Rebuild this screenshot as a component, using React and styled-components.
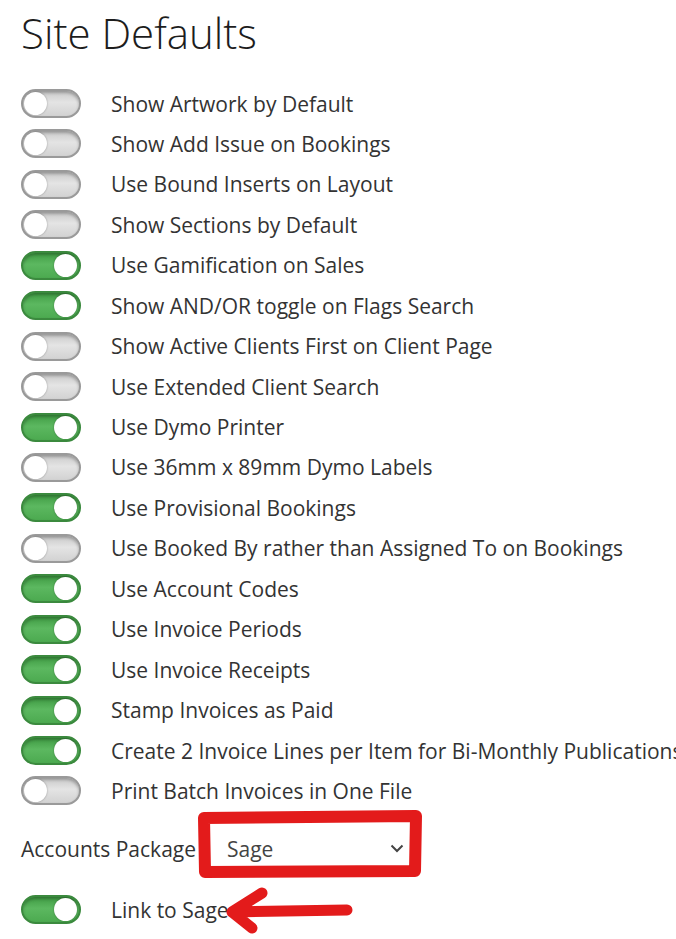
import React from 'react';
import styled, { createGlobalStyle } from 'styled-components';

const GlobalStyle = createGlobalStyle`
  html, body {
    margin: 0;
    padding: 0;
    background: #fff;
    overflow: hidden;
  }
  body {
    font-family: "Open Sans", "Liberation Sans", sans-serif;
    color: #333;
  }
`;

const Page = styled.div`
  position: relative;
  width: 676px;
  height: 939px;
  padding-left: 21px;
  box-sizing: border-box;
  overflow: hidden;
`;

const Title = styled.h1`
  margin: 8.7px 0 26.6px;
  font-size: 42px;
  line-height: 48px;
  font-weight: 300;
  color: #1d1d1d;
`;

const List = styled.div`
  display: flex;
  flex-direction: column;
`;

const Row = styled.div`
  display: flex;
  align-items: center;
  height: 40.45px;
  margin-top: ${(p) => p.$offset || 0}px;
  white-space: nowrap;
`;

const Track = styled.span`
  position: relative;
  flex: none;
  width: 60px;
  height: 29px;
  box-sizing: border-box;
  border-radius: 15px;
  border: 2px solid ${(p) => (p.$on ? '#3b8a3e' : '#9a9a9a')};
  background: ${(p) =>
    p.$on
      ? 'linear-gradient(#3f9b43, #5cb860 45%, #4caa50)'
      : 'linear-gradient(#c9c9c9, #e4e4e4 45%, #d2d2d2)'};
  box-shadow: inset 0 2px 3px rgba(0, 0, 0, 0.25);
`;

const Knob = styled.span`
  position: absolute;
  top: 1px;
  left: ${(p) => (p.$on ? '31px' : '1px')};
  width: 23px;
  height: 23px;
  border-radius: 50%;
  background: #fff;
  box-shadow: 0 0 2px rgba(0, 0, 0, 0.35);
`;

const Label = styled.span`
  margin-left: 30px;
  font-size: 21px;
  color: #333;
`;

const SelectRow = styled.div`
  display: flex;
  align-items: center;
  height: 48px;
  margin-top: 13.5px;
  white-space: nowrap;
`;

const SelectLabel = styled.span`
  font-size: 21px;
  color: #333;
`;

const Select = styled.div`
  display: flex;
  align-items: center;
  justify-content: space-between;
  width: 197px;
  height: 42px;
  margin-left: 15px;
  box-sizing: border-box;
  padding: 0 4px 0 16px;
  font-size: 21px;
  color: #444;
  background: #fff;
`;

const Annotation = styled.svg`
  position: absolute;
  left: 0;
  top: 0;
  pointer-events: none;
`;

const settings = [
  ['Show Artwork by Default', false],
  ['Show Add Issue on Bookings', false],
  ['Use Bound Inserts on Layout', false],
  ['Show Sections by Default', false],
  ['Use Gamification on Sales', true],
  ['Show AND/OR toggle on Flags Search', true],
  ['Show Active Clients First on Client Page', false],
  ['Use Extended Client Search', false],
  ['Use Dymo Printer', true],
  ['Use 36mm x 89mm Dymo Labels', false],
  ['Use Provisional Bookings', true],
  ['Use Booked By rather than Assigned To on Bookings', false],
  ['Use Account Codes', true],
  ['Use Invoice Periods', true],
  ['Use Invoice Receipts', true],
  ['Stamp Invoices as Paid', true],
  ['Create 2 Invoice Lines per Item for Bi-Monthly Publications', true],
  ['Print Batch Invoices in One File', false],
];

function Toggle({ on }) {
  return (
    <Track $on={on}>
      <Knob $on={on} />
    </Track>
  );
}

export default function App() {
  return (
    <Page>
      <GlobalStyle />
      <Title>Site Defaults</Title>
      <List>
        {settings.map(([text, on]) => (
          <Row key={text}>
            <Toggle on={on} />
            <Label>{text}</Label>
          </Row>
        ))}
        <SelectRow>
          <SelectLabel>Accounts Package</SelectLabel>
          <Select>
            Sage
            <svg width="14" height="9" viewBox="0 0 14 9">
              <path d="M1.5 1.5 L7 7 L12.5 1.5" fill="none" stroke="#444" strokeWidth="2" />
            </svg>
          </Select>
        </SelectRow>
        <Row $offset={16.8}>
          <Toggle on />
          <Label>Link to Sage</Label>
        </Row>
      </List>
      <Annotation width="676" height="939" viewBox="0 0 676 939">
        <path
          d="M204 818 L416 816 L415 871 L205 872 Z"
          fill="none"
          stroke="#e31b1b"
          strokeWidth="12"
          strokeLinejoin="round"
        />
        <path
          d="M347 910 L232 912 M262 893 L232 912 L252 928"
          fill="none"
          stroke="#e31b1b"
          strokeWidth="11"
          strokeLinecap="round"
          strokeLinejoin="round"
        />
      </Annotation>
    </Page>
  );
}
